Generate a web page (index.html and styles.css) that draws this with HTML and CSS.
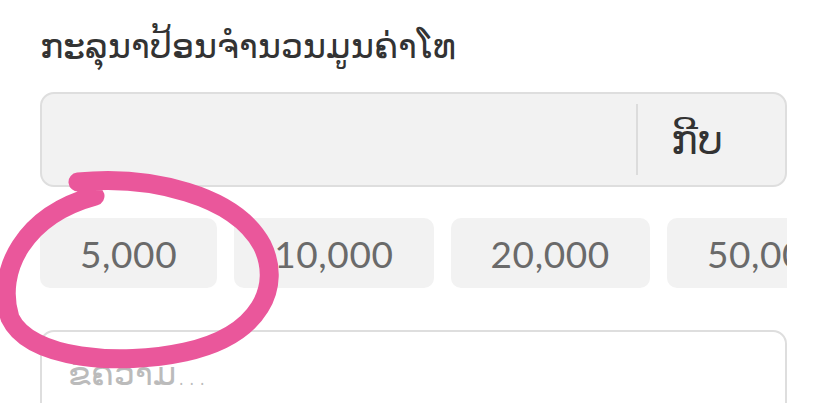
FILE: index.html
```html
<!DOCTYPE html>
<html lang="lo">
<head>
<meta charset="utf-8">
<link rel="stylesheet" href="styles.css">
</head>
<body>
<div class="page">
  <h1 class="title">ກະລຸນາປ້ອນຈຳນວນມູນຄ່າໂທ</h1>
  <div class="amount">
    <div class="amount-field"></div>
    <div class="amount-unit">ກີບ</div>
  </div>
  <div class="chips">
    <div class="chip">5,000</div>
    <div class="chip">10,000</div>
    <div class="chip">20,000</div>
    <div class="chip">50,000</div>
  </div>
  <div class="note">
    <span class="placeholder">ຂໍ້ຄວາມ...</span>
  </div>
</div>
<svg class="scribble" width="828" height="403" viewBox="0 0 828 403">
  <path d="M 78 182 C 150 175, 235 195, 262 245 C 282 285, 262 335, 185 352 C 120 366, 30 360, 10 318 C -5 270, 25 215, 95 196" fill="none" stroke="#ea579b" stroke-width="19" stroke-linecap="round"/>
</svg>
</body>
</html>
```
FILE: styles.css
```css
html, body {
  margin: 0;
  padding: 0;
  background: #ffffff;
  width: 828px;
  height: 403px;
  overflow: hidden;
}
.page {
  width: 747px;
  height: 403px;
  padding: 20px 0 0 40px;
  font-family: "DejaVu Sans", "Noto Sans", sans-serif;
  overflow: hidden;
}
.title {
  margin: 0;
  font-family: "DejaVu Sans", sans-serif;
  font-weight: 300;
  font-size: 35px;
  line-height: 52px;
  color: #333333;
}
.amount {
  margin-top: 20px;
  height: 91px;
  display: flex;
  align-items: stretch;
  background: #f2f2f2;
  border: 2px solid #dedede;
  border-radius: 14px;
}
.amount-field {
  flex: 1;
}
.amount-unit {
  width: 149px;
  box-sizing: border-box;
  display: flex;
  align-items: center;
  margin: 10px 0;
  padding: 0 0 0 33px;
  border-left: 2px solid #dcdcdc;
  font-size: 40px;
  font-weight: 300;
  color: #333333;
}
.chips {
  margin-top: 31px;
  display: flex;
  gap: 17px;
  overflow: hidden;
}
.chip {
  flex: none;
  height: 70px;
  display: flex;
  align-items: center;
  padding: 0 40px;
  background: #f2f2f2;
  border-radius: 10px;
  font-family: "Lato", sans-serif;
  font-size: 37px;
  letter-spacing: 0.6px;
  color: #6a6a6a;
}
.note {
  margin-top: 42px;
  height: 120px;
  border: 2px solid #dedede;
  border-radius: 14px;
  padding: 22px 26px;
}
.placeholder {
  font-size: 33px;
  font-weight: 300;
  color: #bbbbbb;
}
.scribble {
  position: absolute;
  left: 0;
  top: 0;
  pointer-events: none;
}
```
